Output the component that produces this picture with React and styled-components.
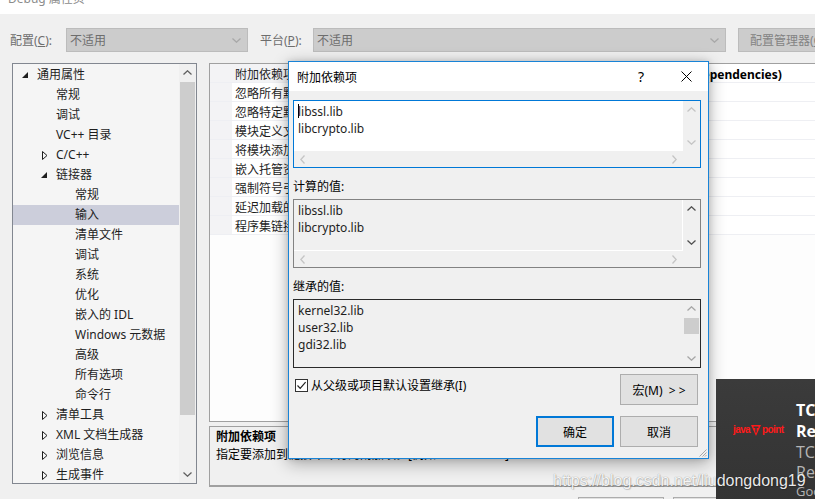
import React from "react";
import styled, { createGlobalStyle } from "styled-components";

const GlobalStyle = createGlobalStyle`
  html, body { margin: 0; padding: 0; background: #f0f0f0; overflow: hidden; }
  body {
    font-family: "Noto Sans", "Noto Sans CJK SC", sans-serif;
    font-size: 12px;
    color: #1e1e1e;
  }
  #root { width: 815px; height: 499px; }
`;

const Page = styled.div`
  position: relative;
  width: 815px;
  height: 499px;
  overflow: hidden;
  background: #f0f0f0;
  display: flex;
  flex-direction: column;
`;

const TitleStrip = styled.div`
  height: 14px;
  flex-shrink: 0;
  background: #fff;
  overflow: hidden;
`;

const TitleText = styled.div`
  margin: -9px 0 0 8px;
  line-height: 16px;
  font-size: 12px;
  color: #8c8c8c;
`;

const ConfigBar = styled.div`
  display: flex;
  align-items: center;
  height: 24px;
  margin-top: 14px;
  padding-left: 10px;
  flex-shrink: 0;
  white-space: nowrap;
`;

const BarLabel = styled.span`
  width: ${(p) => p.$w}px;
  flex-shrink: 0;
  color: #6d6d6d;
`;

const Combo = styled.div`
  box-sizing: border-box;
  width: ${(p) => p.$w}px;
  margin-right: 12px;
  height: 24px;
  flex-shrink: 0;
  background: #cccccc;
  border: 1px solid #bcbcbc;
  display: flex;
  align-items: center;
  justify-content: space-between;
  padding: 0 6px 0 3px;
  color: #6d6d6d;
`;

const ManagerButton = styled.div`
  box-sizing: border-box;
  width: 100px;
  height: 24px;
  flex-shrink: 0;
  background: #cccccc;
  border: 1px solid #bcbcbc;
  display: flex;
  align-items: center;
  padding-left: 11px;
  color: #838383;
`;

const Main = styled.div`
  display: flex;
  margin-top: 11px;
  height: 424px;
  flex-shrink: 0;
`;

const Tree = styled.div`
  box-sizing: border-box;
  margin-left: 12px;
  width: 185px;
  height: 421px;
  flex-shrink: 0;
  border: 1px solid #828790;
  background: #f5f5f5;
  display: flex;
  overflow: hidden;
`;

const TreeList = styled.div`
  flex: 1;
  overflow: hidden;
  padding-top: 1px;
`;

const TreeRow = styled.div`
  height: 20px;
  display: flex;
  align-items: center;
  padding-left: ${(p) => 6 + p.$level * 19}px;
  background: ${(p) => (p.$selected ? "#cccedb" : "transparent")};
  white-space: nowrap;
  color: #1e1e1e;
  line-height: 20px;
`;

const Twisty = styled.span`
  width: 18px;
  height: 20px;
  flex-shrink: 0;
  display: flex;
  align-items: center;
  padding-left: ${(p) => (p.$open ? 3 : 4)}px;
  box-sizing: border-box;
`;

const VScroll = styled.div`
  width: 17px;
  flex-shrink: 0;
  background: #f0f0f0;
  display: flex;
  flex-direction: column;
`;

const ScrollBtn = styled.div`
  height: 17px;
  flex-shrink: 0;
  display: flex;
  align-items: center;
  justify-content: center;
`;

const HScrollBtn = styled.div`
  width: 17px;
  flex-shrink: 0;
  display: flex;
  align-items: center;
  justify-content: center;
`;

const Track = styled.div`
  flex: 1;
  display: flex;
  flex-direction: column;
`;

const Thumb = styled.div`
  margin: 1px 1px 0;
  height: ${(p) => p.$h}px;
  background: #cdcdcd;
`;

const RightCol = styled.div`
  margin-left: 12px;
  flex: 1;
  min-width: 0;
  display: flex;
  flex-direction: column;
`;

const Grid = styled.div`
  box-sizing: border-box;
  height: 359px;
  flex-shrink: 0;
  border: 1px solid #a0a0a0;
  border-right: none;
  background: #fdfdfd;
  overflow: hidden;
`;

const PropRow = styled.div`
  display: flex;
  height: 18px;
  border-bottom: 1px solid #eeeff3;
  white-space: nowrap;
  line-height: 18px;
`;

const Gutter = styled.div`
  width: 22px;
  flex-shrink: 0;
  background: #f3f3f5;
`;

const PropName = styled.div`
  box-sizing: border-box;
  width: ${(p) => p.$w}px;
  flex-shrink: 0;
  padding: 2px 0 0 3px;
  background: ${(p) => (p.$selected ? "#f3f3f5" : "#ffffff")};
  color: #1e1e1e;
`;

const PropValue = styled.div`
  flex: 1;
  padding: 2px 0 0 4px;
  background: #ffffff;
  font-weight: bold;
  color: #000;
`;

const Desc = styled.div`
  box-sizing: border-box;
  margin-top: 4px;
  height: 61px;
  flex-shrink: 0;
  border: 1px solid #a0a0a0;
  border-bottom-width: 2px;
  border-right: none;
  padding: 1px 0 0 6px;
  line-height: 18px;
  white-space: nowrap;
  color: #000;
`;

const DescTitle = styled.div`
  font-weight: bold;
`;

const BottomBar = styled.div`
  display: flex;
  gap: 9px;
  margin-top: 10px;
  padding-left: 578px;
  flex-shrink: 0;
`;

const MainButton = styled.div`
  box-sizing: border-box;
  width: 86px;
  height: 23px;
  flex-shrink: 0;
  background: #e1e1e1;
  border: 1px solid #adadad;
`;

/* ---------- dialog ---------- */

const Dialog = styled.div`
  position: absolute;
  left: 288px;
  top: 61px;
  width: 421px;
  height: 398px;
  box-sizing: border-box;
  border: 1px solid #1883d7;
  background: #f0f0f0;
  box-shadow: 0 4px 16px rgba(0, 0, 0, 0.32), 0 0 6px rgba(0, 0, 0, 0.12);
  display: flex;
  flex-direction: column;
`;

const DialogTitle = styled.div`
  height: 29px;
  flex-shrink: 0;
  background: #fff;
  display: flex;
  align-items: center;
  padding-left: 8px;
  color: #000;
`;

const DialogTitleText = styled.div`
  flex: 1;
`;

const TitleBtn = styled.div`
  width: ${(p) => p.$w}px;
  height: 29px;
  display: flex;
  align-items: center;
  justify-content: center;
  font-size: 14px;
  color: #000;
`;

const DialogBody = styled.div`
  flex: 1;
  display: flex;
  flex-direction: column;
  padding: 0 7px 0 4px;
  position: relative;
`;

const BoxLabel = styled.div`
  margin-top: 10px;
  line-height: 18px;
  height: 18px;
  color: #000;
`;

const ListBox = styled.div`
  box-sizing: border-box;
  margin-top: ${(p) => p.$mt}px;
  height: ${(p) => p.$h}px;
  flex-shrink: 0;
  border: 1px solid ${(p) => p.$border};
  background: ${(p) => p.$bg};
  display: grid;
  grid-template-columns: 1fr 17px;
  grid-template-rows: 1fr ${(p) => (p.$hscroll ? "16px" : "0px")};
  overflow: hidden;
`;

const TextArea = styled.div`
  padding: 2px 0 0 4px;
  line-height: 17px;
  color: #1e1e1e;
  background: ${(p) => p.$bg};
  border-right: ${(p) => (p.$inset ? "1px solid #ffffff" : "none")};
  border-bottom: ${(p) => (p.$inset ? "1px solid #ffffff" : "none")};
`;

const Caret = styled.span`
  display: inline-block;
  width: 1px;
  height: 14px;
  background: #000;
  vertical-align: -2px;
  margin-right: -1px;
`;

const BoxVScroll = styled.div`
  background: #f0f0f0;
  display: flex;
  flex-direction: column;
`;

const BoxHScroll = styled.div`
  background: #f0f0f0;
  display: flex;
  justify-content: space-between;
`;

const Corner = styled.div`
  background: #f0f0f0;
`;

const OptionRow = styled.div`
  margin-top: 6px;
  height: 31px;
  display: flex;
  justify-content: space-between;
  padding-right: 3px;
`;

const CheckLine = styled.div`
  display: flex;
  align-items: center;
  height: 18px;
  margin-top: 2px;
  padding-left: 2px;
  color: #000;
`;

const CheckBox = styled.span`
  box-sizing: border-box;
  width: 13px;
  height: 13px;
  border: 1px solid #333;
  background: #fff;
  margin-right: 3px;
  display: flex;
  align-items: center;
  justify-content: center;
`;

const DlgButton = styled.div`
  box-sizing: border-box;
  width: 78px;
  height: 31px;
  background: #e1e1e1;
  border: ${(p) => (p.$default ? "2px solid #0078d7" : "1px solid #adadad")};
  display: flex;
  align-items: center;
  justify-content: center;
  color: #000;
  white-space: nowrap;
`;

const ButtonRow = styled.div`
  margin-top: 11px;
  display: flex;
  justify-content: flex-end;
  gap: 6px;
  padding-right: 3px;
`;

const Grip = styled.div`
  position: absolute;
  right: 1px;
  bottom: 1px;
  width: 8px;
  height: 8px;
  display: flex;
`;

/* ---------- overlay popup & watermark ---------- */

const Popup = styled.div`
  position: absolute;
  left: 716px;
  top: 379px;
  width: 120px;
  height: 125px;
  background: linear-gradient(180deg, #3b3b3b 0%, #333333 100%);
  display: flex;
  align-items: flex-start;
  padding-left: 17px;
  box-sizing: border-box;
  white-space: nowrap;
`;

const Logo = styled.div`
  width: 46px;
  flex-shrink: 0;
  margin-top: 45px;
  display: flex;
  align-items: center;
  font-family: "Liberation Sans", sans-serif;
  font-weight: bold;
  font-size: 10px;
  letter-spacing: -0.6px;
  line-height: 12px;
  color: #ff1a1a;
  & > svg {
    flex-shrink: 0;
  }
`;

const PopText = styled.div`
  margin-left: 17px;
  margin-top: 21px;
  font-family: "Open Sans", "Noto Sans", sans-serif;
`;

const PopLine = styled.div`
  font-size: ${(p) => p.$size}px;
  line-height: ${(p) => p.$lh}px;
  font-weight: ${(p) => (p.$bold ? 700 : 400)};
  color: ${(p) => (p.$bold ? "#ffffff" : "#b5b5b5")};
`;

const Watermark = styled.div`
  position: absolute;
  left: 553px;
  top: 472px;
  font-family: "Liberation Sans", Arial, sans-serif;
  font-size: 16px;
  line-height: 18px;
  color: rgba(255, 255, 255, 0.92);
  text-shadow: 0 0 1px rgba(0, 0, 0, 0.45), 1px 1px 1px rgba(0, 0, 0, 0.15);
  white-space: nowrap;
`;

/* ---------- icons ---------- */

const Chevron = ({ dir = "down", color = "#606060", w = 8, h = 5 }) => {
  if (dir === "left" || dir === "right") {
    const dd =
      dir === "left"
        ? `M${h - 0.5} 0.5 L0.8 ${w / 2} L${h - 0.5} ${w - 0.5}`
        : `M0.5 0.5 L${h - 0.8} ${w / 2} L0.5 ${w - 0.5}`;
    return (
      <svg width={h} height={w} viewBox={`0 0 ${h} ${w}`}>
        <path d={dd} fill="none" stroke={color} strokeWidth="1.3" />
      </svg>
    );
  }
  const d =
    dir === "up"
      ? `M0.5 ${h - 0.5} L${w / 2} 0.8 L${w - 0.5} ${h - 0.5}`
      : `M0.5 0.5 L${w / 2} ${h - 0.8} L${w - 0.5} 0.5`;
  return (
    <svg width={w} height={h} viewBox={`0 0 ${w} ${h}`}>
      <path d={d} fill="none" stroke={color} strokeWidth="1.3" />
    </svg>
  );
};

const TwistyIcon = ({ open }) =>
  open ? (
    <svg width="6" height="6" viewBox="0 0 6 6">
      <path d="M0 6 L6 6 L6 0 Z" fill="#1e1e1e" />
    </svg>
  ) : (
    <svg width="6" height="9" viewBox="0 0 6 9">
      <path d="M0.5 0.5 L5 4.5 L0.5 8.5 Z" fill="none" stroke="#1e1e1e" strokeWidth="1" />
    </svg>
  );

const CloseIcon = () => (
  <svg width="11" height="11" viewBox="0 0 11 11">
    <path d="M0.5 0.5 L10.5 10.5 M10.5 0.5 L0.5 10.5" stroke="#000" strokeWidth="1" />
  </svg>
);

const CheckIcon = () => (
  <svg width="11" height="11" viewBox="0 0 11 11">
    <path d="M1.5 5.5 L4.2 8.3 L9.6 2.2" fill="none" stroke="#222" strokeWidth="1.2" />
  </svg>
);

const GripIcon = () => (
  <svg width="8" height="8" viewBox="0 0 8 8">
    <path d="M7.5 0.5 L0.5 7.5 M7.5 3.5 L3.5 7.5 M7.5 6 L6 7.5" stroke="#a8a8a8" strokeWidth="1" />
  </svg>
);

const LogoTriangle = () => (
  <svg width="10" height="11" viewBox="0 0 10 11" style={{ margin: "0 1px" }}>
    <path d="M0 0 L10 0 L5 11 Z" fill="#ff1a1a" />
    <path d="M2.6 2.2 L7.4 2.2 M5 2.2 L5 7.6" stroke="#393939" strokeWidth="1.4" />
  </svg>
);

/* ---------- data ---------- */

const treeItems = [
  { t: "通用属性", l: 0, a: "open" },
  { t: "常规", l: 1 },
  { t: "调试", l: 1 },
  { t: "VC++ 目录", l: 1 },
  { t: "C/C++", l: 1, a: "closed" },
  { t: "链接器", l: 1, a: "open" },
  { t: "常规", l: 2 },
  { t: "输入", l: 2, sel: true },
  { t: "清单文件", l: 2 },
  { t: "调试", l: 2 },
  { t: "系统", l: 2 },
  { t: "优化", l: 2 },
  { t: "嵌入的 IDL", l: 2 },
  { t: "Windows 元数据", l: 2 },
  { t: "高级", l: 2 },
  { t: "所有选项", l: 2 },
  { t: "命令行", l: 2 },
  { t: "清单工具", l: 1, a: "closed" },
  { t: "XML 文档生成器", l: 1, a: "closed" },
  { t: "浏览信息", l: 1, a: "closed" },
  { t: "生成事件", l: 1, a: "closed" },
];

const props = [
  { n: "附加依赖项", v: "libssl.lib;libcrypto.lib;%(AdditionalDependencies)", sel: true },
  { n: "忽略所有默认库", v: "" },
  { n: "忽略特定默认库", v: "" },
  { n: "模块定义文件", v: "" },
  { n: "将模块添加到程序集", v: "" },
  { n: "嵌入托管资源文件", v: "" },
  { n: "强制符号引用", v: "" },
  { n: "延迟加载的 DLL", v: "" },
  { n: "程序集链接资源", v: "" },
];

const NAME_COL = 254;

export default function App() {
  return (
    <>
      <GlobalStyle />
      <Page>
        <TitleStrip>
          <TitleText>Debug 属性页</TitleText>
        </TitleStrip>

        <ConfigBar>
          <BarLabel $w={56}>
            配置(<u>C</u>):
          </BarLabel>
          <Combo $w={182}>
            <span>不适用</span>
            <Chevron dir="down" color="#a8a8a8" w={9} h={5} />
          </Combo>
          <BarLabel $w={53}>
            平台(<u>P</u>):
          </BarLabel>
          <Combo $w={413}>
            <span>不适用</span>
            <Chevron dir="down" color="#a8a8a8" w={9} h={5} />
          </Combo>
          <ManagerButton>
            配置管理器(<u>O</u>)...
          </ManagerButton>
        </ConfigBar>

        <Main>
          <Tree>
            <TreeList>
              {treeItems.map((it, i) => (
                <TreeRow key={i} $level={it.l} $selected={it.sel}>
                  {it.l < 2 && (
                    <Twisty $open={it.a === "open"}>
                      {it.a && <TwistyIcon open={it.a === "open"} />}
                    </Twisty>
                  )}
                  {it.l === 2 && <Twisty />}
                  <span>{it.t}</span>
                </TreeRow>
              ))}
            </TreeList>
            <VScroll>
              <ScrollBtn>
                <Chevron dir="up" color="#606060" w={9} h={5} />
              </ScrollBtn>
              <Track>
                <Thumb $h={333} />
              </Track>
              <ScrollBtn>
                <Chevron dir="down" color="#606060" w={9} h={5} />
              </ScrollBtn>
            </VScroll>
          </Tree>

          <RightCol>
            <Grid>
              {props.map((p, i) => (
                <PropRow key={i}>
                  <Gutter />
                  <PropName $w={NAME_COL} $selected={p.sel}>
                    {p.n}
                  </PropName>
                  <PropValue>{p.v}</PropValue>
                </PropRow>
              ))}
            </Grid>
            <Desc>
              <DescTitle>附加依赖项</DescTitle>
              <div>指定要添加到链接命令行的附加项。[例如 kernel32.lib]</div>
            </Desc>
          </RightCol>
        </Main>

        <BottomBar>
          <MainButton />
          <MainButton />
          <MainButton />
        </BottomBar>

        <Dialog>
          <DialogTitle>
            <DialogTitleText>附加依赖项</DialogTitleText>
            <TitleBtn $w={46}>?</TitleBtn>
            <TitleBtn $w={44}>
              <CloseIcon />
            </TitleBtn>
          </DialogTitle>
          <DialogBody>
            <ListBox $mt={9} $h={68} $border="#0078d7" $bg="#ffffff" $hscroll>
              <TextArea $bg="#ffffff">
                <div>
                  <Caret />
                  libssl.lib
                </div>
                <div>libcrypto.lib</div>
              </TextArea>
              <BoxVScroll>
                <ScrollBtn>
                  <Chevron dir="up" color="#c4c4c4" w={9} h={5} />
                </ScrollBtn>
                <Track />
                <ScrollBtn>
                  <Chevron dir="down" color="#c4c4c4" w={9} h={5} />
                </ScrollBtn>
              </BoxVScroll>
              <BoxHScroll>
                <HScrollBtn>
                  <Chevron dir="left" color="#c4c4c4" w={9} h={5} />
                </HScrollBtn>
                <HScrollBtn>
                  <Chevron dir="right" color="#c4c4c4" w={9} h={5} />
                </HScrollBtn>
              </BoxHScroll>
              <Corner />
            </ListBox>

            <BoxLabel>计算的值:</BoxLabel>
            <ListBox $mt={3} $h={69} $border="#828282" $bg="#f0f0f0" $hscroll>
              <TextArea $bg="#f0f0f0" $inset>
                <div>libssl.lib</div>
                <div>libcrypto.lib</div>
              </TextArea>
              <BoxVScroll>
                <ScrollBtn>
                  <Chevron dir="up" color="#505050" w={9} h={5} />
                </ScrollBtn>
                <Track />
                <ScrollBtn>
                  <Chevron dir="down" color="#505050" w={9} h={5} />
                </ScrollBtn>
              </BoxVScroll>
              <BoxHScroll>
                <HScrollBtn>
                  <Chevron dir="left" color="#c4c4c4" w={9} h={5} />
                </HScrollBtn>
                <HScrollBtn>
                  <Chevron dir="right" color="#c4c4c4" w={9} h={5} />
                </HScrollBtn>
              </BoxHScroll>
              <Corner />
            </ListBox>

            <BoxLabel>继承的值:</BoxLabel>
            <ListBox $mt={3} $h={69} $border="#2a2a2a" $bg="#f0f0f0">
              <TextArea $bg="#f0f0f0">
                <div>kernel32.lib</div>
                <div>user32.lib</div>
                <div>gdi32.lib</div>
              </TextArea>
              <BoxVScroll>
                <ScrollBtn>
                  <Chevron dir="up" color="#a6a6a6" w={9} h={5} />
                </ScrollBtn>
                <Track>
                  <Thumb $h={16} />
                </Track>
                <ScrollBtn>
                  <Chevron dir="down" color="#a6a6a6" w={9} h={5} />
                </ScrollBtn>
              </BoxVScroll>
            </ListBox>

            <OptionRow>
              <CheckLine>
                <CheckBox>
                  <CheckIcon />
                </CheckBox>
                从父级或项目默认设置继承(I)
              </CheckLine>
              <DlgButton>宏(M)&nbsp;&nbsp;&gt; &gt;</DlgButton>
            </OptionRow>

            <ButtonRow>
              <DlgButton $default>确定</DlgButton>
              <DlgButton>取消</DlgButton>
            </ButtonRow>

            <Grip>
              <GripIcon />
            </Grip>
          </DialogBody>
        </Dialog>

        <Popup>
          <Logo>
            <span>java</span>
            <LogoTriangle />
            <span>point</span>
          </Logo>
          <PopText>
            <PopLine $bold $size={16} $lh={21}>TC</PopLine>
            <PopLine $bold $size={16} $lh={21}>Re</PopLine>
            <PopLine $size={16} $lh={21}>TC:</PopLine>
            <PopLine $size={16} $lh={19}>Re</PopLine>
            <PopLine $size={13} $lh={19}>Goo</PopLine>
          </PopText>
        </Popup>

        <Watermark>https://blog.csdn.net/liudongdong19</Watermark>
      </Page>
    </>
  );
}
